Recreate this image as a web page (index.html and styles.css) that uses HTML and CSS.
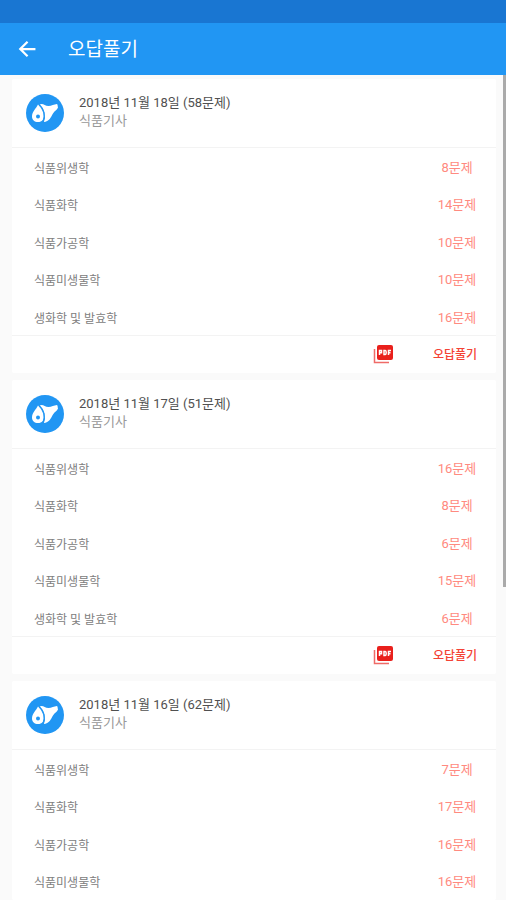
FILE: index.html
```html
<!DOCTYPE html>
<html lang="ko">
<head>
<meta charset="utf-8">
<meta name="viewport" content="width=device-width, initial-scale=1">
<title>오답풀기</title>
<link rel="stylesheet" href="styles.css">
</head>
<body>
<svg class="defs" aria-hidden="true">
  <symbol id="food" viewBox="0 0 38 38">
    <circle cx="19" cy="19" r="19" fill="#2196f3"/>
    <path fill="#fff" d="M12 10.500C10.500 14 6 17.500 6 22.500c0 3.500 2.500 5.500 6 5.500 4 0 6-2.500 6-7 0-4-3-8-6-10.500z"/>
    <path fill="#fff" d="M13.500 10.500c3.500-2 5 1.500 9 1.500 3 0 5.500-1.800 8.500-2 1 1 .5 2.200 1 3.500-1 2.500-3.500 3.500-5 6-2 3.500-3.500 8-9.500 8.500 2.500-6 1.500-12-4-17.500z"/>
    <path fill="none" stroke="#2196f3" stroke-width="1.400" d="M13 10.500c4.500 4 7 11 4 18"/>
    <circle cx="12" cy="22.500" r="2" fill="#2196f3"/>
  </symbol>
  <symbol id="pdf" viewBox="0 0 20 20">
    <path fill="#e9201c" d="M6 0h12q2 0 2 2v11q0 2-2 2H6q-2 0-2-2V2q0-2 2-2z"/>
    <path fill="none" stroke="#ef6b68" stroke-width="1.500" d="M1.500 4v13.500H16"/>
    <path fill="none" stroke="#fff" stroke-width="1.500" d="M6.500 10V5.500h2v2.300h-2M11 5.500v4h1.200q1-.2 1-2t-1-2H11zM15.500 10V5.500H18M15.500 7.800h2"/>
  </symbol>
</svg>
<div class="status"></div>
<header class="bar">
  <button class="back" type="button" aria-label="뒤로">
    <svg viewBox="0 0 16 16"><path d="M8.500 1.500 2 8l6.500 6.500M2 8h13.500"/></svg>
  </button>
  <h1>오답풀기</h1>
</header>
<main class="list">
  <article class="card">
    <header class="head">
      <svg class="logo"><use href="#food"/></svg>
      <div class="titles"><h2>2018년 11월 18일 (58문제)</h2><p>식품기사</p></div>
    </header>
    <ul class="rows">
      <li><span>식품위생학</span><b>8문제</b></li>
      <li><span>식품화학</span><b>14문제</b></li>
      <li><span>식품가공학</span><b>10문제</b></li>
      <li><span>식품미생물학</span><b>10문제</b></li>
      <li><span>생화학 및 발효학</span><b>16문제</b></li>
    </ul>
    <footer class="foot">
      <button class="pdf" type="button" aria-label="PDF"><svg><use href="#pdf"/></svg></button>
      <button class="solve" type="button">오답풀기</button>
    </footer>
  </article>
  <article class="card">
    <header class="head">
      <svg class="logo"><use href="#food"/></svg>
      <div class="titles"><h2>2018년 11월 17일 (51문제)</h2><p>식품기사</p></div>
    </header>
    <ul class="rows">
      <li><span>식품위생학</span><b>16문제</b></li>
      <li><span>식품화학</span><b>8문제</b></li>
      <li><span>식품가공학</span><b>6문제</b></li>
      <li><span>식품미생물학</span><b>15문제</b></li>
      <li><span>생화학 및 발효학</span><b>6문제</b></li>
    </ul>
    <footer class="foot">
      <button class="pdf" type="button" aria-label="PDF"><svg><use href="#pdf"/></svg></button>
      <button class="solve" type="button">오답풀기</button>
    </footer>
  </article>
  <article class="card">
    <header class="head">
      <svg class="logo"><use href="#food"/></svg>
      <div class="titles"><h2>2018년 11월 16일 (62문제)</h2><p>식품기사</p></div>
    </header>
    <ul class="rows">
      <li><span>식품위생학</span><b>7문제</b></li>
      <li><span>식품화학</span><b>17문제</b></li>
      <li><span>식품가공학</span><b>16문제</b></li>
      <li><span>식품미생물학</span><b>16문제</b></li>
    </ul>
  </article>
  <div class="thumb"></div>
</main>
</body>
</html>
```
FILE: styles.css
```css
* { box-sizing: border-box; margin: 0; padding: 0; }
body {
  display: flex;
  flex-direction: column;
  height: 100vh;
  overflow: hidden;
  background: #fafafa;
  color: #808080;
  font-family: Roboto, "Noto Sans CJK KR", sans-serif;
}
button { border: 0; background: none; font: inherit; color: inherit; }
.defs { position: absolute; width: 0; height: 0; }
.status { flex: none; height: 23px; background: #1976d2; }
.bar {
  flex: none;
  display: flex;
  align-items: center;
  gap: 32px;
  height: 52px;
  padding-left: 18px;
  background: #2196f3;
  color: #fff;
}
.back { display: flex; width: 18px; }
.back svg { width: 18px; height: 18px; fill: none; stroke: #fff; stroke-width: 2; }
h1 { padding-top: 2px; font-size: 19px; line-height: 28px; font-weight: 400; }
.list {
  position: relative;
  flex: 1;
  min-height: 0;
  overflow: hidden;
  display: flex;
  flex-direction: column;
  gap: 7px;
  padding: 4px 10px 0 12px;
}
.card { flex: none; background: #fff; border-radius: 2px; }
.head {
  display: flex;
  align-items: center;
  gap: 15px;
  height: 69px;
  padding-left: 14px;
  border-bottom: 1px solid #f3f3f3;
}
.logo { width: 38px; height: 38px; }
.titles { padding-bottom: 2px; }
h2 { font-size: 13px; line-height: 18px; font-weight: 400; color: #505050; }
.head p { font-size: 13px; line-height: 18px; color: #999; }
.rows { list-style: none; }
.rows li {
  display: flex;
  align-items: center;
  justify-content: space-between;
  height: 37px;
  padding: 2px 0 0 22px;
  font-size: 12px;
  line-height: 18px;
}
.rows li:nth-child(even) { height: 38px; }
.rows span { padding-top: 2px; }
.rows b { width: 78px; text-align: center; font-size: 13px; font-weight: 400; color: #ff8a80; }
.foot {
  display: flex;
  align-items: center;
  justify-content: flex-end;
  height: 38px;
  border-top: 1px solid #f3f3f3;
}
.pdf { display: flex; margin-right: 21px; }
.pdf svg { width: 20px; height: 20px; }
.solve { width: 82px; font-size: 12px; line-height: 18px; font-weight: 500; color: #f44336; }
.thumb {
  position: absolute;
  top: 0;
  right: 0;
  width: 3px;
  height: 62%;
  background: #aaa;
}
```
